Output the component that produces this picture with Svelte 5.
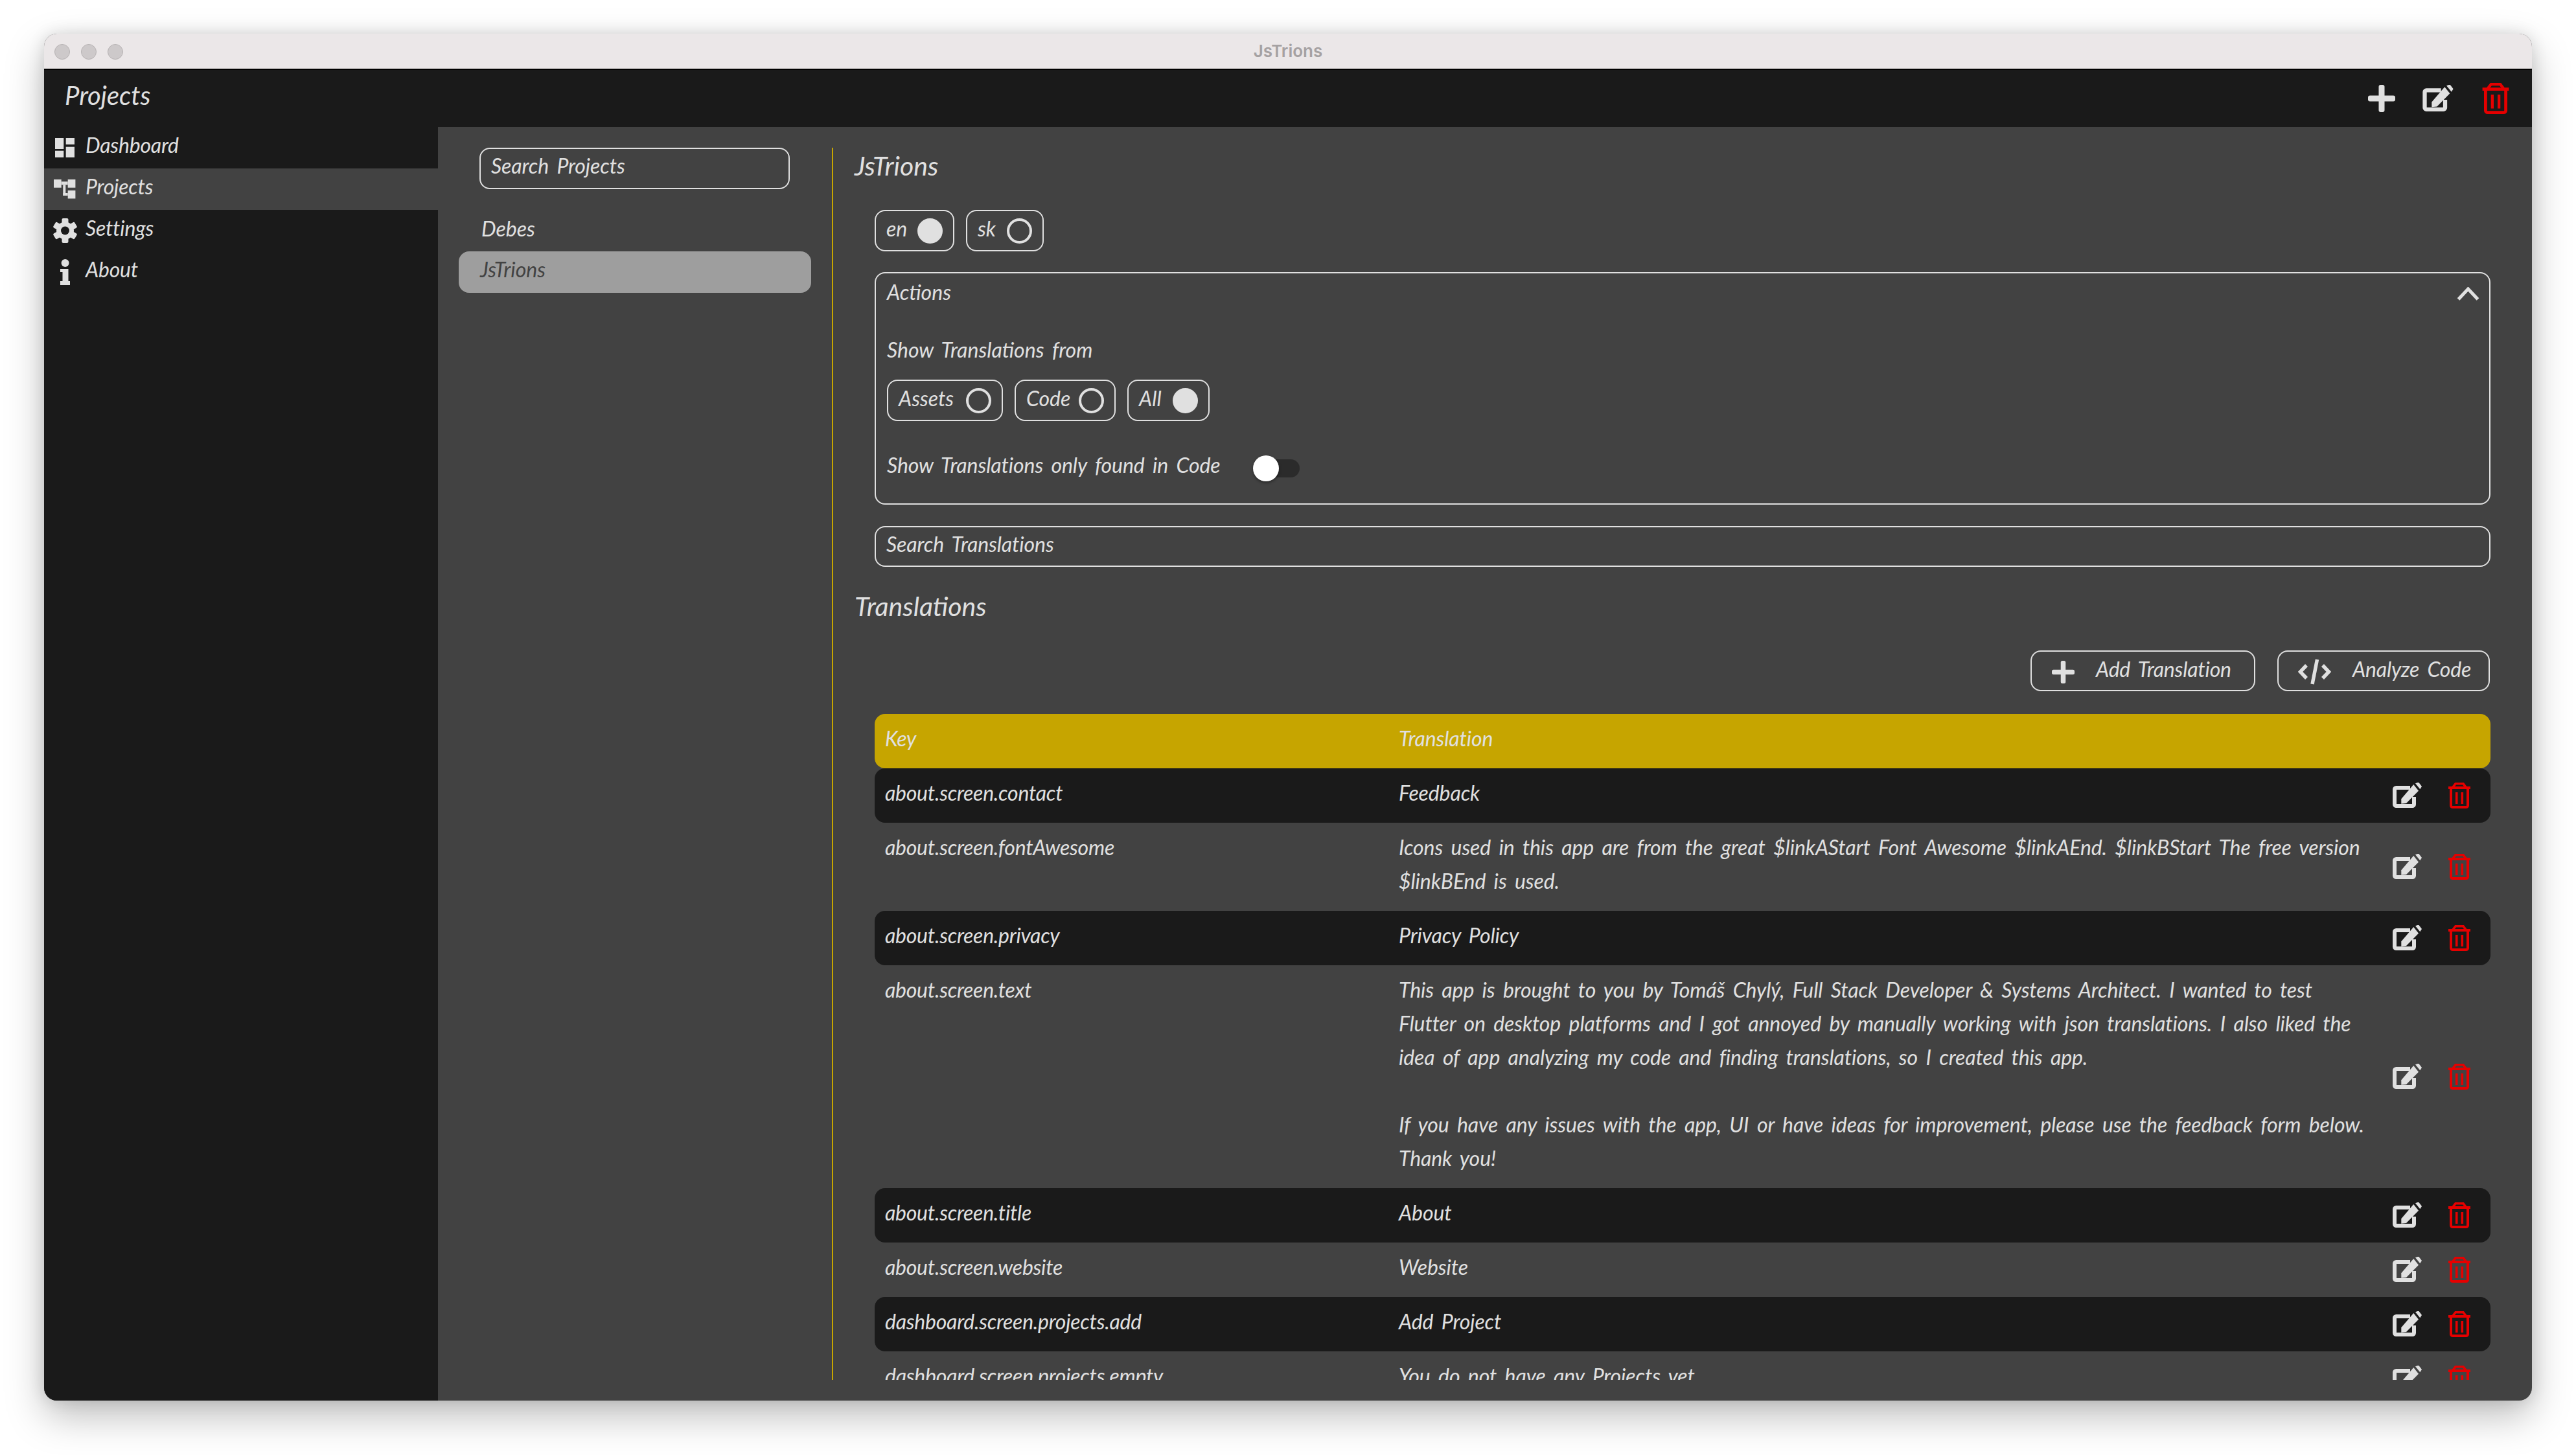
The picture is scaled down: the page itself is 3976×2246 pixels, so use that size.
<script>
  const nav = [
    { label: 'Dashboard', icon: 'dash' },
    { label: 'Projects', icon: 'proj', active: true },
    { label: 'Settings', icon: 'gear' },
    { label: 'About', icon: 'info' }
  ];
  const rows = [
    { k: 'about.screen.contact', t: ['Feedback'], dark: true },
    { k: 'about.screen.fontAwesome', t: ['Icons used in this app are from the great $linkAStart Font Awesome $linkAEnd. $linkBStart The free version', '$linkBEnd is used.'] },
    { k: 'about.screen.privacy', t: ['Privacy Policy'], dark: true },
    { k: 'about.screen.text', t: ['This app is brought to you by Tomáš Chylý, Full Stack Developer & Systems Architect. I wanted to test', 'Flutter on desktop platforms and I got annoyed by manually working with json translations. I also liked the', 'idea of app analyzing my code and finding translations, so I created this app.', '\u00a0', 'If you have any issues with the app, UI or have ideas for improvement, please use the feedback form below.', 'Thank you!'] },
    { k: 'about.screen.title', t: ['About'], dark: true },
    { k: 'about.screen.website', t: ['Website'] },
    { k: 'dashboard.screen.projects.add', t: ['Add Project'], dark: true },
    { k: 'dashboard.screen.projects.empty', t: ['You do not have any Projects yet'] }
  ];
  const teeth = [0, 60, 120];
</script>

{#snippet editIcon(cls)}
  <svg class={cls} viewBox="0 0 46 40" fill="#e0e0e0" aria-hidden="true">
    <path d="M27 8H5.500a2.500 2.500 0 0 0-2.500 2.500V33.500a2.500 2.500 0 0 0 2.500 2.500H30.500a2.500 2.500 0 0 0 2.500-2.500V22" fill="none" stroke="#e0e0e0" stroke-width="6"/>
    <path d="M13.300 32.700V25.300L32.300 3 40 12.700 21 32Z"/>
    <path d="M35 1.300 40 -.6 45 6 42.300 10.300Z"/>
  </svg>
{/snippet}

{#snippet trashIcon(cls)}
  <svg class={cls} viewBox="0 0 34 40" aria-hidden="true">
    <path d="M7 7 11 1.800H23L27 7" fill="none" stroke="#e60000" stroke-width="3.600"/>
    <rect x="0" y="6" width="34" height="4" fill="#e60000"/>
    <path d="M4 9V35.500a2.500 2.500 0 0 0 2.500 2.500H27.500a2.500 2.500 0 0 0 2.500-2.500V9" fill="none" stroke="#e60000" stroke-width="4"/>
    <path d="M12.700 15V33M21.300 15V33" stroke="#e60000" stroke-width="3.600"/>
  </svg>
{/snippet}

{#snippet plusIcon(cls)}
  <svg class={cls} viewBox="0 0 42 42" aria-hidden="true">
    <rect x="16.500" y="0" width="9" height="42" rx="3" fill="#e0e0e0"/>
    <rect x="0" y="16.500" width="42" height="9" rx="3" fill="#e0e0e0"/>
  </svg>
{/snippet}

<div class="page">
  <div class="window">
    <div class="titlebar">
      <div class="lights"><i></i><i></i><i></i></div>
      <div class="wintitle">JsTrions</div>
    </div>
    <header class="appbar">
      <div class="apptitle">Projects</div>
      <div class="appactions">
        {@render plusIcon('hplus')}
        {@render editIcon('hedit')}
        {@render trashIcon('htrash')}
      </div>
    </header>
    <div class="body">
      <nav class="sidebar">
        {#each nav as n}
          <div class="navitem" class:active={n.active}>
            <span class="navicon">
              {#if n.icon === 'dash'}
                <svg width="30" height="30" viewBox="0 0 30 30" fill="#e0e0e0"><rect width="13.300" height="17"/><rect y="19.700" width="13.300" height="10.300"/><rect x="16.700" width="13.300" height="10"/><rect x="16.700" y="13.700" width="13.300" height="16.300"/></svg>
              {:else if n.icon === 'proj'}
                <svg width="34" height="30" viewBox="0 0 34 30" fill="#e0e0e0"><rect width="11.700" height="12.700"/><rect x="21.700" width="11.700" height="12.700"/><rect x="21.700" y="17" width="11.700" height="12.500"/><rect x="11.700" y="3.300" width="10" height="5"/><rect x="14.300" y="8.300" width="4" height="16.700"/><rect x="14.300" y="21" width="7.400" height="4"/></svg>
              {:else if n.icon === 'gear'}
                <svg width="37" height="38" viewBox="0 0 37 38" fill="#e0e0e0"><circle cx="18.500" cy="19" r="13.500"/>{#each teeth as a}<rect x="13.500" y="0" width="10" height="38" rx="2" transform="rotate({a} 18.500 19)"/>{/each}<circle cx="18.500" cy="19" r="6.500" fill="#1a1a1a"/></svg>
              {:else}
                <svg width="15" height="40" viewBox="0 0 15 40" fill="#e0e0e0"><circle cx="7.600" cy="6" r="6"/><path d="M0 15H12.500V34H15V40H0V34H3.500V20H0Z"/></svg>
              {/if}
            </span>
            <span class="navlabel">{n.label}</span>
          </div>
        {/each}
      </nav>

      <section class="projects">
        <div class="search">Search Projects</div>
        <div class="group">Debes</div>
        <div class="project">JsTrions</div>
      </section>

      <main class="detail">
        <h2 class="heading first">JsTrions</h2>
        <div class="chips langs">
          <div class="chip c-en">en <span class="radio on"></span></div>
          <div class="chip c-sk">sk <span class="radio"></span></div>
        </div>

        <div class="actions">
          <div class="acthead">
            <span>Actions</span>
            <svg class="chev" viewBox="0 0 35 21" aria-hidden="true"><path d="M2.500 19 17.500 3 32.500 19" fill="none" stroke="#e0e0e0" stroke-width="5"/></svg>
          </div>
          <div class="actlabel">Show Translations from</div>
          <div class="chips">
            <div class="chip c-assets">Assets <span class="radio"></span></div>
            <div class="chip c-code">Code <span class="radio"></span></div>
            <div class="chip c-all">All <span class="radio on"></span></div>
          </div>
          <div class="switchrow">
            <span class="switchlabel">Show Translations only found in Code</span>
            <span class="switch"><span class="thumb"></span></span>
          </div>
        </div>

        <div class="search wide">Search Translations</div>
        <h2 class="heading second">Translations</h2>

        <div class="buttons">
          <div class="btn b-add">
            {@render plusIcon('bplus')}
            <span>Add Translation</span>
          </div>
          <div class="btn b-code">
            <svg class="bcode" viewBox="0 0 51 40" aria-hidden="true"><path d="M13 10 3.500 20 13 30M38 10 47.500 20 38 30" fill="none" stroke="#e0e0e0" stroke-width="5.500"/><path d="M29.500 1 22 39" stroke="#e0e0e0" stroke-width="5.500"/></svg>
            <span>Analyze Code</span>
          </div>
        </div>

        <div class="table">
          <div class="row head">
            <div class="key">Key</div>
            <div class="val">Translation</div>
          </div>
          {#each rows as r}
            <div class="row" class:dark={r.dark}>
              <div class="key">{r.k}</div>
              <div class="val">{#each r.t as l}<div class="line">{l}</div>{/each}</div>
              <div class="rowact">
                {@render editIcon('redit')}
                {@render trashIcon('rtrash')}
              </div>
            </div>
          {/each}
        </div>
      </main>
    </div>
  </div>
</div>

<style>
  :global(body) { margin: 0; background: #fff; }
  * { box-sizing: border-box; }
  svg { display: block; flex: none; }
  .page {
    width: 3976px; height: 2246px; padding: 52px 68px 84px; overflow: hidden;
    font-family: "Lato", "Liberation Sans", sans-serif; font-style: italic;
    font-size: 32px; line-height: 52px; word-spacing: 5px; color: #e0e0e0;
  }
  .window {
    height: 2110px; border-radius: 20px; overflow: hidden; display: flex; flex-direction: column;
    background: #424242; box-shadow: 0 24px 60px rgba(0,0,0,.26), 0 0 24px rgba(0,0,0,.12);
  }
  .titlebar {
    height: 56px; flex: none; background: #ebe7e8; border-bottom: 2px solid #000; position: relative;
    display: flex; align-items: center; justify-content: center;
  }
  .lights { position: absolute; left: 16px; top: 16px; display: flex; gap: 17px; }
  .lights i { width: 24px; height: 24px; border-radius: 50%; background: #cdc9ca; border: 1px solid #b6b2b3; }
  .wintitle { font-family: "Inter", sans-serif; font-style: normal; font-weight: 600; font-size: 26px; color: #a5a1a2; word-spacing: 0; line-height: 1; }
  .appbar {
    height: 88px; flex: none; background: #1a1a1a; display: flex; align-items: center; justify-content: space-between;
    padding: 0 35px 0 32px;
  }
  .apptitle { font-size: 40px; line-height: 1; padding-bottom: 10px; }
  .appactions { display: flex; align-items: center; }
  .hplus { width: 42px; height: 42px; margin-right: 42px; }
  .hedit { width: 49px; height: 42px; margin-right: 43px; }
  .htrash { width: 42px; height: 48px; }
  .body { flex: 1; display: flex; min-height: 0; }
  .sidebar { width: 608px; flex: none; background: #1a1a1a; }
  .navitem { height: 64px; display: flex; align-items: center; }
  .navitem.active { background: #424242; }
  .navicon { width: 64px; flex: none; display: flex; justify-content: center; }
  .navlabel { padding-bottom: 8px; letter-spacing: -.2px; }
  .projects { width: 608px; flex: none; padding: 32px 32px 0 32px; }
  .search {
    height: 64px; width: 479px; margin-left: 32px; border: 2px solid #e0e0e0; border-radius: 16px;
    padding: 0 16px 8px; display: flex; align-items: center; letter-spacing: -.1px;
  }
  .group { margin: 32px 0 0 35px; height: 64px; display: flex; align-items: center; padding-bottom: 6px; }
  .project {
    height: 64px; background: #9e9e9e; color: #424242; border-radius: 16px;
    display: flex; align-items: center; padding: 0 0 8px 33px;
  }
  .detail {
    width: 2560px; margin-top: 32px; height: 1902px; overflow: hidden; flex: none;
    border-left: 2px solid #c6a500; padding-left: 32px;
  }
  .heading { margin: 0; font-weight: 400; font-size: 41px; line-height: 56px; height: 56px; padding-left: 1px; }
  .first { margin-bottom: 40px; }
  .chips { display: flex; gap: 18px; }
  .langs { margin-left: 32px; }
  .chip {
    height: 64px; border: 2px solid #e0e0e0; border-radius: 16px; display: flex; align-items: center;
    justify-content: space-between; padding: 0 16px 7px 16px;
  }
  .c-en { width: 123px; } .c-sk { width: 120px; }
  .c-assets { width: 179px; } .c-code { width: 156px; } .c-all { width: 127px; }
  .radio { width: 39px; height: 39px; border-radius: 50%; border: 4px solid #e0e0e0; flex: none; margin-top: 7px; }
  .radio.on { background: #e0e0e0; }
  .actions {
    margin: 32px 0 0 32px; height: 359px; border: 2px solid #e0e0e0; border-radius: 16px; padding: 3px 15px 0 17px;
  }
  .acthead { height: 52px; display: flex; justify-content: space-between; align-items: center; }
  .chev { width: 35px; height: 21px; margin-top: 4px; }
  .actlabel { margin-top: 37px; height: 52px; }
  .actions .chips { margin-top: 20px; }
  .switchrow { margin-top: 43px; height: 52px; display: flex; align-items: center; }
  .switchlabel { width: 565px; flex: none; padding-bottom: 2px; white-space: nowrap; letter-spacing: -.1px; }
  .switch { width: 72px; height: 28px; border-radius: 14px; background: #2b2b2b; position: relative; margin-top: 7px; }
  .thumb { position: absolute; left: 0; top: -6px; width: 40px; height: 40px; border-radius: 50%; background: #fff; box-shadow: 0 2px 4px rgba(0,0,0,.4); }
  .wide { width: auto; margin: 33px 0 0 32px; height: 63px; }
  .second { margin-top: 33px; }
  .buttons { display: flex; justify-content: flex-end; gap: 34px; margin-top: 40px; height: 63px; padding-right: 1px; }
  .btn {
    height: 63px; border: 2px solid #e0e0e0; border-radius: 16px; display: flex; align-items: center;
  }
  .btn span { padding-bottom: 6px; white-space: nowrap; letter-spacing: -.2px; }
  .b-add { width: 347px; padding-left: 31px; gap: 33px; }
  .b-code { width: 328px; padding-left: 30px; gap: 33px; }
  .bplus { width: 35px; height: 35px; margin-top: 4px; }
  .bcode { width: 51px; height: 40px; margin-top: 2px; }
  .table { margin: 35px 0 0 32px; }
  .row { display: flex; padding: 12px 0 20px 16px; border-radius: 16px; position: relative; }
  .row.head { background: #c6a500; height: 84px; }
  .row.dark { background: #1a1a1a; }
  .key { width: 793px; flex: none; white-space: nowrap; letter-spacing: -.25px; }
  .val { flex: 1; white-space: nowrap; letter-spacing: -.1px; }
  .line { height: 52px; }
  .rowact { flex: none; display: flex; align-items: center; gap: 40px; padding-right: 31px; margin: -12px 0 -20px; }
  .redit { width: 46px; height: 40px; }
  .rtrash { width: 34px; height: 40px; }
</style>
